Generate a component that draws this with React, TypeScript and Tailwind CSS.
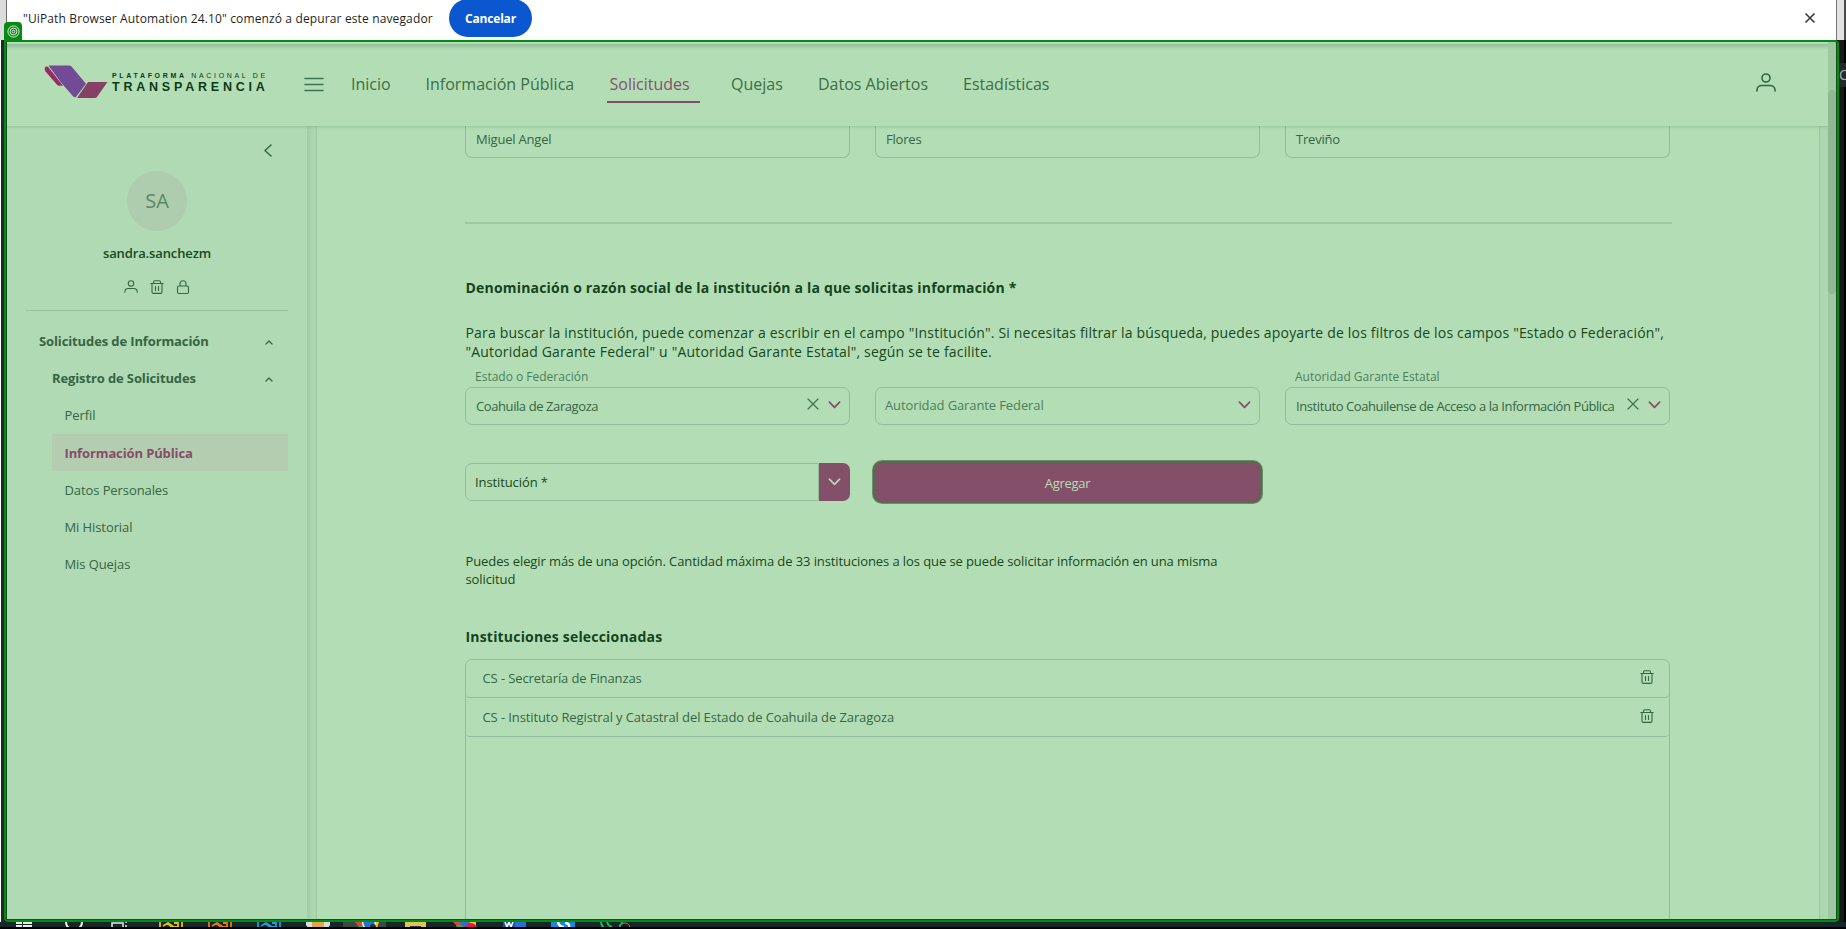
import React from "react";

type IconProps = { className?: string };

const UserIcon = ({ className }: IconProps) => (
  <svg viewBox="0 0 20 19" fill="none" stroke="currentColor" strokeWidth="1.6" strokeLinecap="round" className={className}>
    <circle cx="10" cy="5" r="4" />
    <path d="M1 18v-1c0-3 2.6-4.500 5-4.500h8c2.4 0 5 1.500 5 4.500v1" />
  </svg>
);

const TrashIcon = ({ className }: IconProps) => (
  <svg viewBox="0 0 14 14" fill="none" stroke="currentColor" strokeWidth="1.100" strokeLinecap="round" strokeLinejoin="round" className={className}>
    <path d="M.8 3.500h12.400M3.500 3.500V2c0-.8.5-1.300 1.300-1.300h4.400c.8 0 1.300.5 1.300 1.300v1.500M2 3.500v8.500c0 .8.6 1.400 1.400 1.400h7.200c.8 0 1.400-.6 1.400-1.400V3.500M5.500 6.500v4M8.500 6.500v4" />
  </svg>
);

const LockIcon = ({ className }: IconProps) => (
  <svg viewBox="0 0 14 14" fill="none" stroke="currentColor" strokeWidth="1.100" className={className}>
    <rect x="1.500" y="6" width="11" height="7.500" rx="1.500" />
    <path d="M4 6V3.700C4 2 5.300.700 7 .700s3 1.300 3 3V6" />
  </svg>
);

const ChevronDown = ({ className }: IconProps) => (
  <svg viewBox="0 0 14 8" fill="none" stroke="currentColor" strokeWidth="1.800" strokeLinecap="round" strokeLinejoin="round" className={className}>
    <path d="M1.500 1L7 6.500 12.500 1" />
  </svg>
);

const CloseIcon = ({ className }: IconProps) => (
  <svg viewBox="0 0 12 12" fill="none" stroke="currentColor" strokeWidth="1.300" strokeLinecap="round" className={className}>
    <path d="M1 1l10 10M11 1L1 11" />
  </svg>
);

const AngleUp = () => (
  <svg viewBox="0 0 8 5" fill="none" stroke="currentColor" strokeWidth="1.300" strokeLinecap="round" strokeLinejoin="round" className="mt-[2px] h-[5px] w-2">
    <path d="M1 4l3-3 3 3" />
  </svg>
);

const InfoBar = () => (
  <div className="flex h-[40px] shrink-0">
    <div className="w-[6px] bg-[#dcdcdc]" />
    <div className="w-px bg-[#6b6b6b]" />
    <div className="flex w-[1829px] items-start bg-white">
      <span className="ml-4 w-[426px] whitespace-nowrap pt-[9px] text-[12px] leading-[20px] tracking-[0.135px] text-[#1f1f1f]">
        "UiPath Browser Automation 24.10" comenzó a depurar este navegador
      </span>
      <button className="-mt-px h-[38px] w-[83px] rounded-full bg-[#0b57d0] pt-[2px] text-[12px] font-bold tracking-[-0.200px] text-white">Cancelar</button>
      <svg viewBox="0 0 12 12" fill="none" stroke="#3a3a3a" strokeWidth="1.600" className="ml-auto mr-5 mt-3 h-3 w-3">
        <path d="M1.500 1.500l9 9M10.500 1.500l-9 9" />
      </svg>
    </div>
    <div className="w-px bg-[#777]" />
    <div className="w-[7px] bg-[#e2e2e2]" />
    <div className="w-[2px] bg-[#4a4a4a]" />
  </div>
);

const Logo = () => (
  <div className="ml-[37px] flex w-[222px] gap-1">
    <svg viewBox="0 0 64 37" preserveAspectRatio="none" className="h-[34px] w-16 shrink-0">
      <path d="M1 2.500Q0 5 1.500 7L13 21.500q1 1 2.500 1h3.500L4 2Q2 1 1 2.500z" fill="#9a2a63" />
      <path d="M4.500.500H25q1.500 0 2.500 1.200L42 20.500 32.500 34q-1.500 2-3.500 0L17 19z" fill="#724a96" />
      <path d="M44 18.500h19.500L53.500 34q-1 2-3 2H33z" fill="#874065" />
    </svg>
    <div className="pt-[6px] font-['Liberation_Sans',sans-serif] text-[#0d3a16]">
      <div className="whitespace-nowrap text-[7px] leading-[10px] tracking-[2.670px]"><span className="font-bold">PLATAFORMA</span> NACIONAL DE</div>
      <div className="whitespace-nowrap text-[12.5px] font-bold leading-[13px] tracking-[3.780px]">TRANSPARENCIA</div>
    </div>
  </div>
);

const navItems = [
  { label: "Inicio", box: "w-[74.500px] text-[#3d6d46]" },
  { label: "Información Pública", box: "w-[184px] text-[#3d6d46]" },
  { label: "Solicitudes", box: "w-[121.500px] text-[#86516d]" },
  { label: "Quejas", box: "w-[87px] text-[#3d6d46]" },
  { label: "Datos Abiertos", box: "w-[145px] text-[#3d6d46]" },
  { label: "Estadísticas", box: "w-[100px] text-[#3d6d46]" },
];

const Header = () => (
  <header className="relative z-10 h-[84px] shrink-0 bg-[#b3deb5] shadow-[0_1px_3px_rgba(30,90,50,0.2)]">
    <div className="h-[2px]" />
    <div className="h-[6px] bg-gradient-to-b from-[#93bb9a] to-[#b3deb5]" />
    <div className="flex w-[1821px] items-start pt-[15px]">
      <Logo />
      <svg viewBox="0 0 20 15" className="mr-[27px] ml-[38px] mt-[12px] h-[15px] w-5 shrink-0 text-[#417350]" stroke="currentColor" strokeWidth="1.500" strokeLinecap="round">
        <path d="M1 1.500h18M1 7.500h18M1 13.500h18" />
      </svg>
      <nav className="flex pt-[7px] text-[16px] leading-6">
        {navItems.map((n) => (
          <a key={n.label} className={"relative whitespace-nowrap " + n.box}>
            {n.label}
            {n.label === "Solicitudes" && <span className="absolute -left-[3px] top-[29px] h-[2px] w-[93px] bg-[#854c69]" />}
          </a>
        ))}
      </nav>
      <UserIcon className="ml-auto mr-[52px] mt-[8px] h-[19px] w-5 text-[#326342]" />
    </div>
  </header>
);

const Sidebar = () => (
  <aside className="h-full w-[300px] shrink-0 bg-[#b0dab3] pl-[19px] pr-[19px] text-[13px] text-[#356543] shadow-[1px_0_5px_rgba(30,90,50,0.14)]">
    <div className="flex h-[45px] justify-end pr-[16px] pt-[17.500px]">
      <svg viewBox="0 0 8 13" fill="none" stroke="currentColor" strokeWidth="1.500" strokeLinecap="round" strokeLinejoin="round" className="h-[13px] w-2">
        <path d="M7 1L1 6.500 7 12" />
      </svg>
    </div>
    <div className="mx-auto flex h-[60px] w-[60px] items-center justify-center rounded-full bg-[#aecdae] text-[20px] text-[#5a8a62]">SA</div>
    <div className="mt-[12px] text-center font-semibold leading-5 tracking-[-0.120px] text-[#174a20]">sandra.sanchezm</div>
    <div className="mt-[17px] flex h-[14px] justify-center gap-3">
      <UserIcon className="h-[13px] w-[14px]" />
      <TrashIcon className="h-[14px] w-[14px]" />
      <LockIcon className="h-[14px] w-[14px]" />
    </div>
    <div className="mt-[16px] h-px bg-[#98c3a1]" />
    <div className="mt-[12px] flex h-[37px] items-center justify-between pl-[13px] pr-[15px] font-bold tracking-[-0.120px]">
      Solicitudes de Información <AngleUp />
    </div>
    <div className="flex h-[37px] items-center justify-between pl-[26px] pr-[15px] font-bold tracking-[-0.120px]">
      Registro de Solicitudes <AngleUp />
    </div>
    <div className="ml-[26px] tracking-[-0.090px]">
      <div className="flex h-[37px] items-center pl-[12.500px]">Perfil</div>
      <div className="flex h-[37px] items-center bg-[#b4ccb0] pl-[12.500px] pt-[2px] font-bold tracking-[-0.120px] text-[#854c69]">Información Pública</div>
      <div className="flex h-[37px] items-center pl-[12.500px] pt-[2px]">Datos Personales</div>
      <div className="flex h-[37px] items-center pl-[12.500px] pt-[2px]">Mi Historial</div>
      <div className="flex h-[37px] items-center pl-[12.500px] pt-[2px]">Mis Quejas</div>
    </div>
  </aside>
);

const NameField = ({ value }: { value: string }) => (
  <div className="flex h-[32px] w-[385px] items-center rounded-b-[7px] border border-t-0 border-[#92bd9c] pb-[3px] pl-[10px] tracking-[-0.200px]">{value}</div>
);

const SelectField = ({ label, value, placeholder }: { label?: string; value?: string; placeholder?: string }) => (
  <div className="w-[385px]">
    <div className="h-[19px] pl-[10px] text-[12px] leading-[19px] text-[#4c7f5b]">{label}</div>
    <div className="mt-px flex h-[38px] items-center rounded-[7px] border border-[#92bd9c] pl-[10px] pr-[8px]">
      {value ? (
        <span className="whitespace-nowrap pt-[2px] tracking-[-0.410px]">{value}</span>
      ) : (
        <span className="-ml-px tracking-[-0.110px] text-[#4c7f5b]">{placeholder}</span>
      )}
      {value && <CloseIcon className="-mt-1 ml-auto mr-[9px] h-3 w-3 shrink-0 text-[#417350]" />}
      <ChevronDown className={"-mt-[3px] h-2 w-[13px] shrink-0 text-[#854c69] " + (value ? "" : "ml-auto")} />
    </div>
  </div>
);

const InstitutionRow = ({ name, height }: { name: string; height: string }) => (
  <div className={"flex items-center justify-between rounded-b-[4px] border-b border-[#92bd9c] pl-[16.500px] pr-[15px] tracking-[-0.100px] " + height}>
    <span>{name}</span>
    <TrashIcon className="-mt-[3px] h-[14px] w-[14px]" />
  </div>
);

const Content = () => (
  <main className="ml-[9px] h-full w-[1504px] shrink-0 border-x border-[#9cc7a5] bg-[#b3deb5] pl-[148px] text-[13px] text-[#356543]">
    <div className="flex gap-[25px]">
      <NameField value="Miguel Angel" />
      <NameField value="Flores" />
      <NameField value="Treviño" />
    </div>
    <div className="mt-[64px] h-[2px] w-[1207px] bg-[#9dc8a2]" />
    <h2 className="mt-[54px] whitespace-nowrap pl-[0.500px] text-[14px] font-bold leading-5 tracking-[0.190px] text-[#14441d]">
      Denominación o razón social de la institución a la que solicitas información *
    </h2>
    <p className="mt-[25px] whitespace-nowrap pl-[0.500px] text-[14px] leading-[19px] tracking-[0.182px] text-[#174820]">
      Para buscar la institución, puede comenzar a escribir en el campo "Institución". Si necesitas filtrar la búsqueda, puedes apoyarte de los filtros de los campos "Estado o Federación",
      <br />
      "Autoridad Garante Federal" u "Autoridad Garante Estatal", según se te facilite.
    </p>
    <div className="mt-[6px] flex gap-[25px]">
      <SelectField label="Estado o Federación" value="Coahuila de Zaragoza" />
      <SelectField placeholder="Autoridad Garante Federal" />
      <SelectField label="Autoridad Garante Estatal" value="Instituto Coahuilense de Acceso a la Información Pública" />
    </div>
    <div className="mt-[38px] flex gap-[25px]">
      <div className="flex h-[38px] w-[385px]">
        <div className="flex flex-1 items-center rounded-l-[7px] border border-[#92bd9c] pl-[9px] pt-[2px] tracking-[-0.100px] text-[#174820]">Institución *</div>
        <div className="flex w-[31px] items-center justify-center rounded-r-[7px] bg-[#834f69] text-[#b3deb5]">
          <ChevronDown className="-mt-px h-2 w-[13px]" />
        </div>
      </div>
      <button className="h-[38px] w-[385px] rounded-[7px] bg-[#834f69] pt-[3px] text-[13px] tracking-[-0.300px] text-[#b3deb5] shadow-[0_0_0_2px_#566a4f,0_0_0_3px_#718b6d]">
        Agregar
      </button>
    </div>
    <p className="mt-[51px] whitespace-nowrap pl-[0.500px] leading-[18px] tracking-[-0.095px] text-[#174820]">
      Puedes elegir más de una opción. Cantidad máxima de 33 instituciones a los que se puede solicitar información en una misma
      <br />
      solicitud
    </p>
    <h3 className="mt-[39px] pl-[0.500px] text-[14px] font-bold leading-5 tracking-[0.190px] text-[#14441d]">Instituciones seleccionadas</h3>
    <div className="mt-[12px] h-[400px] w-[1205px] rounded-t-[7px] border border-[#92bd9c]">
      <InstitutionRow name="CS - Secretaría de Finanzas" height="h-[38px]" />
      <InstitutionRow name="CS - Instituto Registral y Catastral del Estado de Coahuila de Zaragoza" height="h-[39px] pt-px" />
    </div>
  </main>
);

const Taskbar = () => (
  <div className="flex h-[7px] shrink-0 overflow-hidden border-b-2 border-black bg-[#16262b]">
    <svg viewBox="0 0 660 5" className="h-[5px] w-[660px]">
      <path d="M16 0h6v2h-6zM23 0h9v2h-9zM16 3h6v2h-6zM23 3h9v2h-9z" fill="#e8ecec" />
      <path d="M66 0q0 4 3 6M82 0q0 4-3 6" stroke="#e8ecec" strokeWidth="2" fill="none" />
      <path d="M112 6V1h11v5M126 0v1M126 3v3" stroke="#e8ecec" strokeWidth="1.500" fill="none" />
      <g fill="none" strokeWidth="1.800">
        <path d="M160 0v6M182 0v6M163 4l5-3 6 4M167 1l5 4h7M174 1h4v4" stroke="#e3be14" />
        <path d="M209 0v6M231 0v6M212 4l5-3 6 4M216 1l5 4h7M223 1h4v4" stroke="#e87817" />
        <path d="M258 0v6M280 0v6M261 4l5-3 6 4M265 1l5 4h7M272 1h4v4" stroke="#239bd6" />
      </g>
      <path d="M306 0h24v3l-2 3h-20l-2-3z" fill="#d9dcdc" />
      <path d="M312 0h12v6h-12z" fill="#e3a64c" />
      <path d="M343 0h43v6h-43z" fill="#3b4649" />
      <path d="M357 0h10v6h-8z" fill="#36a852" />
      <path d="M355 0h9v4h-6z" fill="#e34133" />
      <path d="M370 0h9l-2 6h-7z" fill="#f4c430" />
      <circle cx="369" cy="1" r="7" fill="#e8ecec" />
      <circle cx="369" cy="1" r="5.500" fill="#2d6fd0" />
      <circle cx="373" cy="5" r="3" fill="#22303a" />
      <path d="M405 0h21v6h-21z" fill="#e5c15d" />
      <path d="M410 4h11v2h-11z" fill="#2b3f49" />
      <path d="M455 0h10v6h-8z" fill="#36a852" />
      <path d="M453 0h9v3h-6z" fill="#e34133" />
      <path d="M468 0h8v4h-8z" fill="#f4c430" />
      <circle cx="465" cy="0" r="5" fill="#2d6fd0" />
      <circle cx="471" cy="7" r="6" fill="#e3174f" />
      <path d="M503 0h12v6h-12z" fill="#1b52ad" />
      <path d="M515 0h11v6h-11z" fill="#2a6fce" />
      <path d="M505 0l2 5 2-5 2 5 2-5" stroke="#fff" strokeWidth="1.500" fill="none" />
      <path d="M551 0h24v6h-24z" fill="#1c86e0" />
      <path d="M558 0q1 5 6 5M565 1q5 0 4 5" stroke="#fff" strokeWidth="2.500" fill="none" />
      <path d="M601 0q0 3 3 6M622 0q0 3-3 4M607 0q1 4 5 5" stroke="#1fb65a" strokeWidth="2" fill="none" />
      <circle cx="625" cy="6" r="5" fill="#1a1a1a" stroke="#888" />
    </svg>
  </div>
);

export default function App() {
  return (
    <div className="relative flex h-[929px] w-[1846px] flex-col overflow-hidden bg-black font-['Open_Sans',sans-serif]">
      <InfoBar />
      <div className="flex h-[882px] shrink-0">
        <div className="w-px bg-white" />
        <div className="w-[3px] bg-[#22282b]" />
        <div className="w-[1835px] overflow-hidden rounded-b-[4px] rounded-tr-[4px] border-2 border-[#048c10]">
          <div className="flex h-full border-x border-b border-[#14501d]">
            <div className="flex h-full w-[1821px] flex-col overflow-hidden bg-[#add7b0]">
              <Header />
              <div className="flex min-h-0 flex-1 overflow-hidden">
                <Sidebar />
                <Content />
              </div>
            </div>
            <div className="w-2 bg-[#9dc8a0] pt-[48px]">
              <div className="h-[204px] rounded-full bg-[#8fb993]" />
            </div>
          </div>
        </div>
        <div className="w-[7px] border-r-2 border-black bg-[#17191b] pt-[23px]">
          <div className="h-6 w-[7px] bg-[#24272b] text-[14px] leading-6 text-[#a9adb3]">C</div>
        </div>
      </div>
      <Taskbar />
      <div className="absolute left-1 top-[22px] flex h-[18px] w-[18px] items-center justify-center rounded-t-[4px] bg-[#048c10]">
        <svg viewBox="0 0 14 14" fill="none" stroke="#e6f5e6" strokeWidth="1" className="h-[13px] w-[13px]">
          <circle cx="7" cy="7" r="6" />
          <circle cx="7" cy="7" r="3.700" />
          <circle cx="7" cy="7" r="1.400" />
        </svg>
      </div>
    </div>
  );
}
